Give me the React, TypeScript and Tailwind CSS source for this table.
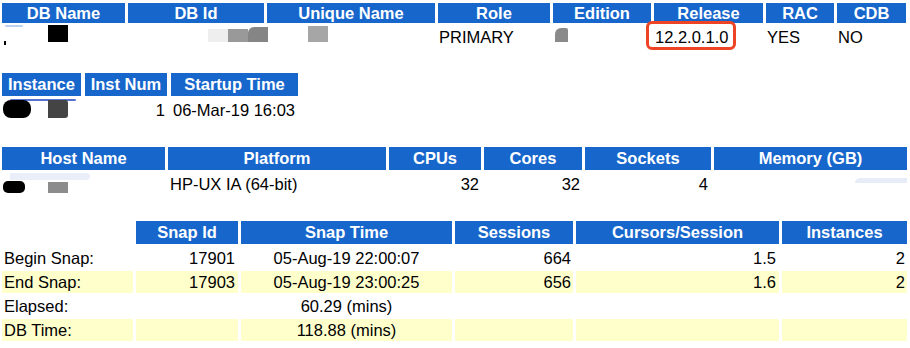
import React from "react";

const HC =
  "bg-[#1766cc] text-white font-bold flex items-center justify-center whitespace-nowrap leading-none";
const DC = "flex items-center whitespace-nowrap leading-none text-black relative";
const Y = "bg-[#ffffcc]";

export default function App() {
  return (
    <div
      className="relative w-[910px] h-[348px] bg-white overflow-hidden text-[16.5px]"
      style={{ fontFamily: '"Liberation Sans", Arial, sans-serif' }}
    >
      <div className="pt-[3px] pl-[2px]">
        {/* Table 1 */}
        <div className="grid grid-cols-[123px_136px_168px_112px_98px_109px_68px_69px] gap-x-[3px] gap-y-[3px]">
          {["DB Name", "DB Id", "Unique Name", "Role", "Edition", "Release", "RAC", "CDB"].map((h) => (
            <div key={h} className={`${HC} h-[20px]`}>{h}</div>
          ))}
          <div className={`${DC} h-[23px]`}>
            <span className="absolute left-[3px] top-[-1px] w-[18px] h-[2px] bg-[#bcd0f0] rounded-full" />
            <span className="absolute left-[2px] top-[15px] w-[2px] h-[4px] bg-black" />
            <span className="absolute left-[46px] top-[-1px] w-[20px] h-[17px] bg-black" />
          </div>
          <div className={`${DC} h-[23px]`}>
            <span className="absolute left-[80px] top-[3px] w-[20px] h-[13px] bg-[#eeeeee]" />
            <span className="absolute left-[100px] top-[3px] w-[20px] h-[13px] bg-[#999999]" />
            <span className="absolute left-[120px] top-[1px] w-[20px] h-[15px] bg-[#858585] rounded-tl-[6px]" />
          </div>
          <div className={`${DC} h-[23px]`}>
            <span className="absolute left-[41px] top-[0px] w-[20px] h-[16px] bg-[#a6a6a6]" />
          </div>
          <div className={`${DC} h-[23px] pl-[1px]`}>PRIMARY</div>
          <div className={`${DC} h-[23px]`}>
            <span className="absolute left-[2px] top-[2px] w-[13px] h-[14px] bg-[#8a8a8a] rounded-tl-[6px] rounded-tr-[2px]" />
          </div>
          <div className={`${DC} h-[23px] pl-[1px]`}>12.2.0.1.0</div>
          <div className={`${DC} h-[23px] pl-[1px]`}>YES</div>
          <div className={`${DC} h-[23px] pl-[1px]`}>NO</div>
        </div>

        {/* Table 2 */}
        <div className="mt-[24px] grid grid-cols-[79px_82px_127px] gap-x-[4px] gap-y-[3px] w-max">
          {["Instance", "Inst Num", "Startup Time"].map((h) => (
            <div key={h} className={`${HC} h-[23px]`}>{h}</div>
          ))}
          <div className={`${DC} h-[23px]`}>
            <span className="absolute left-[8px] top-[0px] w-[66px] h-[2px] bg-[#2c4fc4] rounded-full opacity-80" />
            <span className="absolute left-[1px] top-[1px] w-[28px] h-[18px] bg-black rounded-[8px]" />
            <span className="absolute left-[46px] top-[1px] w-[20px] h-[18px] bg-[#444444] rounded-r-[3px]" />
          </div>
          <div className={`${DC} h-[23px] justify-end pr-[2px]`}>1</div>
          <div className={`${DC} h-[23px] pl-[2px]`}>06-Mar-19 16:03</div>
        </div>

        {/* Table 3 */}
        <div className="mt-[25px] grid grid-cols-[163px_218px_92px_98px_126px_193px] gap-x-[3px] gap-y-[3px]">
          {["Host Name", "Platform", "CPUs", "Cores", "Sockets", "Memory (GB)"].map((h) => (
            <div key={h} className={`${HC} h-[23px]`}>{h}</div>
          ))}
          <div className={`${DC} h-[23px]`}>
            <span className="absolute left-[8px] top-[0px] w-[80px] h-[7px] bg-[#e9eef8] rounded-r-full" />
            <span className="absolute left-[1px] top-[8px] w-[22px] h-[12px] bg-black rounded-[5px]" />
            <span className="absolute left-[46px] top-[9px] w-[20px] h-[11px] bg-[#8c8c8c]" />
          </div>
          <div className={`${DC} h-[23px] pl-[2px]`}>HP-UX IA (64-bit)</div>
          <div className={`${DC} h-[23px] justify-end pr-[2px]`}>32</div>
          <div className={`${DC} h-[23px] justify-end pr-[2px]`}>32</div>
          <div className={`${DC} h-[23px] justify-end pr-[3px]`}>4</div>
          <div className={`${DC} h-[23px]`}>
            <span className="absolute right-[0px] top-[5px] w-[52px] h-[5px] bg-[#e6edf8] rounded-tl-full" />
          </div>
        </div>

        {/* Table 4 */}
        <div className="mt-[25px] grid grid-cols-[131px_102px_211px_118px_203px_125px] gap-x-[3px] gap-y-[2px]">
          <div className="h-[23px] mb-[1px]" />
          {["Snap Id", "Snap Time", "Sessions", "Cursors/Session", "Instances"].map((h) => (
            <div key={h} className={`${HC} h-[23px] mb-[1px]`}>{h}</div>
          ))}

          <div className={`${DC} h-[22px] pl-[2px]`}>Begin Snap:</div>
          <div className={`${DC} h-[22px] justify-end pr-[3px]`}>17901</div>
          <div className={`${DC} h-[22px] justify-center`}>05-Aug-19 22:00:07</div>
          <div className={`${DC} h-[22px] justify-end pr-[2px]`}>664</div>
          <div className={`${DC} h-[22px] justify-end pr-[3px]`}>1.5</div>
          <div className={`${DC} h-[22px] justify-end pr-[2px]`}>2</div>

          <div className={`${DC} ${Y} h-[22px] pl-[2px]`}>End Snap:</div>
          <div className={`${DC} ${Y} h-[22px] justify-end pr-[3px]`}>17903</div>
          <div className={`${DC} ${Y} h-[22px] justify-center`}>05-Aug-19 23:00:25</div>
          <div className={`${DC} ${Y} h-[22px] justify-end pr-[2px]`}>656</div>
          <div className={`${DC} ${Y} h-[22px] justify-end pr-[3px]`}>1.6</div>
          <div className={`${DC} ${Y} h-[22px] justify-end pr-[2px]`}>2</div>

          <div className={`${DC} h-[22px] pl-[2px]`}>Elapsed:</div>
          <div className={`${DC} h-[22px]`} />
          <div className={`${DC} h-[22px] justify-center`}>60.29 (mins)</div>
          <div className={`${DC} h-[22px]`} />
          <div className={`${DC} h-[22px]`} />
          <div className={`${DC} h-[22px]`} />

          <div className={`${DC} ${Y} h-[22px] pl-[2px]`}>DB Time:</div>
          <div className={`${DC} ${Y} h-[22px]`} />
          <div className={`${DC} ${Y} h-[22px] justify-center`}>118.88 (mins)</div>
          <div className={`${DC} ${Y} h-[22px]`} />
          <div className={`${DC} ${Y} h-[22px]`} />
          <div className={`${DC} ${Y} h-[22px]`} />
        </div>
      </div>

      {/* highlight annotation */}
      <div className="absolute left-[646px] top-[21px] w-[90px] h-[29px] border-[3px] border-[#ee4426] rounded-[6px]" />
    </div>
  );
}
